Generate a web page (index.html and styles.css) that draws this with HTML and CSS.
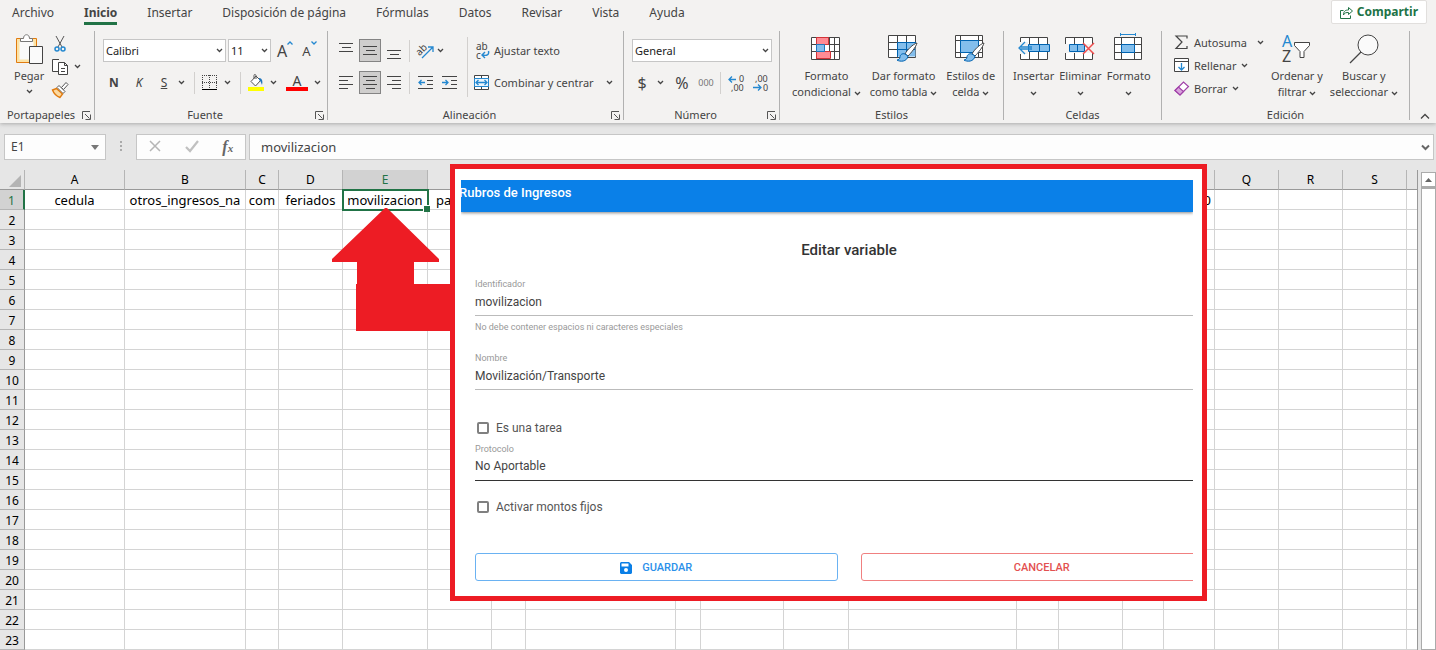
FILE: index.html
```html
<!DOCTYPE html>
<html lang="es">
  <head>
    <meta charset="utf-8">
    <meta name="viewport" content="width=device-width,initial-scale=1.0">
    <title>Rubros de Ingresos</title>
    <link rel="stylesheet" href="styles.css">
  </head>
  <body>
    <svg class="symbols" width="0" height="0">
      <symbol id="caret" viewBox="0 0 7 5"><path d="M1 1l2.500 2.500L6 1" fill="none" stroke="#444" stroke-width="1.300"/></symbol>
      <symbol id="launcher" viewBox="0 0 9 9"><path d="M.5 8V.5H8M3 3l4.500 4.500M8.500 3.500v5h-5" fill="none" stroke="#555"/></symbol>
      <symbol id="brush" viewBox="0 0 22 20">
        <path d="M21 1C17 2 11 8 9 12l3 2c3-3 8-9 9-13z" fill="#fff" stroke="#444"/>
        <path d="M9 12c-3-1-5 1-5 3s-2 3-3 3c3 2 10 2 11-4z" fill="#83beec" stroke="#0063b1"/>
      </symbol>
    </svg>

    <header class="ribbon">
      <nav class="tabs">
        <a href="#">Archivo</a>
        <a href="#" class="activa">Inicio</a>
        <a href="#">Insertar</a>
        <a href="#">Disposición de página</a>
        <a href="#">Fórmulas</a>
        <a href="#">Datos</a>
        <a href="#">Revisar</a>
        <a href="#">Vista</a>
        <a href="#">Ayuda</a>
        <button class="compartir">
          <svg width="13" height="13" viewBox="0 0 13 13" fill="none" stroke="#217346"><path d="M3.500 4.500h-3v8h10v-3M3.500 9c0-4 2-5 5-5V1.500l4 3.500-4 3.500V6.500c-2 0-4 0-5 2.500z"/></svg>
          Compartir
        </button>
      </nav>

      <div class="groups">
        <section class="group portapapeles">
          <div class="group-body">
            <button class="big pegar">
              <svg width="28" height="32" viewBox="0 0 28 32">
                <path d="M1.500 5.500h20v24h-20z" fill="#fce3a6" stroke="#e07b10"/>
                <path d="M4.500 8.500h14v18h-14z" fill="#fafafa"/>
                <path d="M5.500 8.500v-3h3c0-5 6-5 6 0h3v3z" fill="#fff" stroke="#777"/>
                <path d="M14.500 13.500h13v17h-13z" fill="#fafafa" stroke="#444"/>
              </svg>
              <span>Pegar</span>
              <svg class="caret"><use href="#caret"/></svg>
            </button>
            <div class="pila">
              <button aria-label="Cortar">
                <svg width="16" height="16" viewBox="0 0 16 16" fill="none"><path d="M4 0l6 11M12 0L6 11" stroke="#555"/><circle cx="5" cy="13" r="2" stroke="#2488d0" stroke-width="1.500"/><circle cx="11" cy="13" r="2" stroke="#2488d0" stroke-width="1.500"/></svg>
              </button>
              <button aria-label="Copiar">
                <svg width="17" height="16" viewBox="0 0 17 16" fill="#fff" stroke="#444"><path d="M6 12.500H.5V.5H7M6.500 3.500h6l3 3v9h-9zM12.500 3.500v3h3M9 9.500h4M9 12.500h4"/></svg>
                <svg class="caret"><use href="#caret"/></svg>
              </button>
              <button aria-label="Copiar formato">
                <svg width="17" height="16" viewBox="0 0 17 16"><path d="M9.500 5.500L14 .5l2 2-4.500 5z" fill="#fff" stroke="#555"/><path d="M7 3.500l6 6-2 2-6-6z" fill="#fff" stroke="#555"/><path d="M4.500 6.500L.5 8C2 12 4 14 8 15.500l2.500-3.500z" fill="#fbd9a0" stroke="#e07b10" stroke-width="1.400"/></svg>
              </button>
            </div>
          </div>
          <footer><span>Portapapeles</span><button aria-label="Opciones de portapapeles"><svg width="9" height="9"><use href="#launcher"/></svg></button></footer>
        </section>

        <section class="group fuente">
          <div class="group-body filas">
            <div class="fila">
              <label class="combo nombre-fuente"><select aria-label="Fuente"><option>Calibri</option></select><svg class="caret"><use href="#caret"/></svg></label>
              <label class="combo tamano"><select aria-label="Tamaño"><option>11</option></select><svg class="caret"><use href="#caret"/></svg></label>
              <button class="letra-grande">A<svg width="6" height="4" viewBox="0 0 6 4"><path d="M.5 3.500L3 1l2.500 2.500" fill="none" stroke="#2488d0" stroke-width="1.300"/></svg></button>
              <button class="letra-chica">A<svg width="6" height="4" viewBox="0 0 6 4"><path d="M.5.5L3 3 5.500.5" fill="none" stroke="#2488d0" stroke-width="1.300"/></svg></button>
            </div>
            <div class="fila">
              <button class="icono"><b>N</b></button>
              <button class="icono"><i>K</i></button>
              <button class="icono"><u>S</u></button>
              <svg class="caret"><use href="#caret"/></svg>
              <span class="sep"></span>
              <button class="icono" aria-label="Bordes">
                <svg width="16" height="16" viewBox="0 0 16 16" fill="none" stroke="#444"><path d="M0 .5h15M0 7.500h15M.5 0v14M7.500 0v14M14.500 0v14" stroke-dasharray="1 1"/><path d="M0 14.500h15" stroke="#000"/></svg>
              </button>
              <svg class="caret"><use href="#caret"/></svg>
              <span class="sep"></span>
              <button class="icono" aria-label="Color de relleno">
                <svg width="16" height="17" viewBox="0 0 16 17"><path d="M3 7.500L8 2l4.500 4.500-5 5.500zM6 5V1.500C6 0 8 0 8 2v3" fill="#fff" stroke="#555"/><path d="M11 4c3 0 4 3 3 7-1-2-1-4-3-5z" fill="#1f76bd"/><path d="M0 13h16v4H0z" fill="#ff0"/></svg>
              </button>
              <svg class="caret"><use href="#caret"/></svg>
              <button class="icono color-fuente">A</button>
              <svg class="caret"><use href="#caret"/></svg>
            </div>
          </div>
          <footer><span>Fuente</span><button aria-label="Opciones de fuente"><svg width="9" height="9"><use href="#launcher"/></svg></button></footer>
        </section>

        <section class="group alineacion">
          <div class="group-body">
            <div class="filas">
              <div class="fila">
                <button class="icono" aria-label="Alinear arriba"><svg width="14" height="16" viewBox="0 0 14 16" stroke="#444"><path d="M0 .5h14M3 4.500h9M0 8.500h14"/></svg></button>
                <button class="icono pulsado" aria-label="Alinear en el medio"><svg width="14" height="16" viewBox="0 0 14 16" stroke="#444"><path d="M0 3.500h14M3 7.500h9M0 11.500h14"/></svg></button>
                <button class="icono" aria-label="Alinear abajo"><svg width="14" height="16" viewBox="0 0 14 16" stroke="#444"><path d="M0 7.500h14M3 11.500h9M0 15.500h14"/></svg></button>
                <span class="sep"></span>
                <button class="icono" aria-label="Orientación"><svg width="17" height="17" viewBox="0 0 17 17"><text x="0" y="12" font-size="10" fill="#444" transform="rotate(-45 4 10)">ab</text><path d="M5 16L16 5M11 5h5v5" fill="none" stroke="#2488d0" stroke-width="1.300"/></svg></button>
                <svg class="caret"><use href="#caret"/></svg>
              </div>
              <div class="fila">
                <button class="icono" aria-label="Alinear a la izquierda"><svg width="14" height="16" viewBox="0 0 14 16" stroke="#444"><path d="M0 1.500h14M0 5.500h9M0 9.500h14M0 13.500h9"/></svg></button>
                <button class="icono pulsado" aria-label="Centrar"><svg width="14" height="16" viewBox="0 0 14 16" stroke="#444"><path d="M0 1.500h14M3 5.500h9M0 9.500h14M3 13.500h9"/></svg></button>
                <button class="icono" aria-label="Alinear a la derecha"><svg width="14" height="16" viewBox="0 0 14 16" stroke="#444"><path d="M0 1.500h14M5 5.500h9M0 9.500h14M5 13.500h9"/></svg></button>
                <span class="sep"></span>
                <button class="icono" aria-label="Disminuir sangría"><svg width="15" height="15" viewBox="0 0 15 15" fill="none" stroke="#444"><path d="M0 1.500h15M9 5.500h6M9 9.500h6M0 13.500h15"/><path d="M7 7.500H1M3.500 5L1 7.500 3.500 10" stroke="#2488d0" stroke-width="1.300"/></svg></button>
                <button class="icono" aria-label="Aumentar sangría"><svg width="15" height="15" viewBox="0 0 15 15" fill="none" stroke="#444"><path d="M0 1.500h15M9 5.500h6M9 9.500h6M0 13.500h15"/><path d="M0 7.500h6M3.500 5L6 7.500 3.500 10" stroke="#2488d0" stroke-width="1.300"/></svg></button>
              </div>
            </div>
            <div class="filas ajustes">
              <div class="fila">
                <button class="con-texto">
                  <svg width="16" height="18" viewBox="0 0 16 18"><text x="2" y="8" font-size="10" fill="#444">ab</text><text x="2" y="17" font-size="10" fill="#444">c</text><path d="M14.500 9c1 4-2 5-6 4M11 10l-3 3 3 3" fill="none" stroke="#2488d0" stroke-width="1.400"/></svg>
                  Ajustar texto
                </button>
              </div>
              <div class="fila">
                <button class="con-texto">
                  <svg width="16" height="16" viewBox="0 0 16 16"><path d="M.5.5h14v14H.5zM7.500 0v15" fill="#fff" stroke="#444"/><path d="M.5 3.500h14v8H.5z" fill="#eaf4fc" stroke="#2488d0"/><path d="M2 7.500h11M4.500 5L2 7.500 4.500 10M10.500 5L13 7.500 10.500 10" fill="none" stroke="#2488d0" stroke-width="1.300"/></svg>
                  Combinar y centrar
                  <svg class="caret"><use href="#caret"/></svg>
                </button>
              </div>
            </div>
          </div>
          <footer><span>Alineación</span><button aria-label="Opciones de alineación"><svg width="9" height="9"><use href="#launcher"/></svg></button></footer>
        </section>

        <section class="group numero">
          <div class="group-body filas">
            <div class="fila">
              <label class="combo"><select aria-label="Formato de número"><option>General</option></select><svg class="caret"><use href="#caret"/></svg></label>
            </div>
            <div class="fila">
              <button class="icono simbolo">$</button>
              <svg class="caret"><use href="#caret"/></svg>
              <button class="icono simbolo">%</button>
              <button class="icono miles">000</button>
              <span class="sep"></span>
              <button class="icono" aria-label="Aumentar decimales"><svg width="17" height="18" viewBox="0 0 17 18" font-size="9" fill="#444"><text x="11" y="8">0</text><text x="3" y="17">,00</text><path d="M8 5.500H1M4 2.500l-3 3 3 3" fill="none" stroke="#2488d0" stroke-width="1.300"/></svg></button>
              <button class="icono" aria-label="Disminuir decimales"><svg width="17" height="18" viewBox="0 0 17 18" font-size="9" fill="#444"><text x="3" y="8">,00</text><text x="11" y="17">0</text><path d="M1 13.500h8M6 10.500l3 3-3 3" fill="none" stroke="#2488d0" stroke-width="1.300"/></svg></button>
            </div>
          </div>
          <footer><span>Número</span><button aria-label="Opciones de número"><svg width="9" height="9"><use href="#launcher"/></svg></button></footer>
        </section>

        <section class="group estilos">
          <div class="group-body">
            <button class="big">
              <svg width="30" height="24" viewBox="0 0 30 24"><path d="M.5.5h28v22H.5zM0 7.500h29M0 14.500h29M5.500 0v22M18.500 0v22M23.500 0v22" fill="#fff" stroke="#444"/><path d="M5.500.5h12v7h-12zM5.500 14.500h14v7h-14z" fill="#ff8b94" stroke="#d13438"/><path d="M5.500 7.500h8v7h-8z" fill="#83beec" stroke="#1f76bd"/></svg>
              <span>Formato<br>condicional <svg class="caret"><use href="#caret"/></svg></span>
            </button>
            <button class="big">
              <svg width="31" height="28" viewBox="0 0 31 28"><path d="M.5.500h27v22H.5zM0 7.500h28M0 14.500h28M9.500 0v22M18.500 0v22" fill="#fff" stroke="#444"/><path d="M9.500 7.500h18v14h-18z" fill="#83beec"/><path d="M9.500 22V7.500H28M9 14.500h18M18.500 8v14" fill="none" stroke="#0063b1"/><use href="#brush" x="8" y="7" width="22" height="20"/></svg>
              <span>Dar formato<br>como tabla <svg class="caret"><use href="#caret"/></svg></span>
            </button>
            <button class="big">
              <svg width="31" height="28" viewBox="0 0 31 28"><path d="M.5.500h27v22H.5zM0 5.500h28M0 17.500h28M5.500 0v22M23.500 0v22" fill="#fff" stroke="#444"/><path d="M5.500 5.500h18v12h-18z" fill="#83beec" stroke="#0063b1"/><use href="#brush" x="8" y="7" width="22" height="20"/></svg>
              <span>Estilos de<br>celda <svg class="caret"><use href="#caret"/></svg></span>
            </button>
          </div>
          <footer><span>Estilos</span></footer>
        </section>

        <section class="group celdas">
          <div class="group-body">
            <button class="big">
              <svg width="32" height="24" viewBox="0 0 32 24"><path d="M2.500.5h27v22h-27zM11.500 0v23M20.500 0v23" fill="#fff" stroke="#444"/><path d="M10.500 7.500h21v7h-21zM21.500 8v7" fill="#83beec" stroke="#0063b1"/><path d="M0 5h10v12H0z" fill="#f3f2f1"/><path d="M14 10H2M14 12H2M7 5l-6 6 6 6" fill="none" stroke="#2488d0" stroke-width="1.300"/></svg>
              <span>Insertar<br><svg class="caret"><use href="#caret"/></svg></span>
            </button>
            <button class="big">
              <svg width="32" height="24" viewBox="0 0 32 24"><path d="M1.500.5h27v22h-27zM10.500 0v23M19.500 0v23" fill="#fff" stroke="#444"/><path d="M0 7h31v9H0z" fill="#f3f2f1"/><path d="M5.500 7.500h15v7h-15zM13.500 8v7" fill="#83beec" stroke="#0063b1"/><path d="M19 6l11 11M30 6L19 17" stroke="#f04e4e" stroke-width="1.500"/></svg>
              <span>Eliminar<br><svg class="caret"><use href="#caret"/></svg></span>
            </button>
            <button class="big">
              <svg width="29" height="32" viewBox="0 0 29 32"><path d="M.5 4.500h27v22H.5zM0 11.500h28M0 19.500h28M7.500 4v22M20.500 4v22" fill="#fff" stroke="#444"/><path d="M7.500 11.500h13v8h-13z" fill="#83beec" stroke="#0063b1"/><path d="M6.500 0v3M21.500 0v3M7 1.500h14" stroke="#2488d0"/></svg>
              <span>Formato<br><svg class="caret"><use href="#caret"/></svg></span>
            </button>
          </div>
          <footer><span>Celdas</span></footer>
        </section>

        <section class="group edicion">
          <div class="group-body">
            <div class="pila">
              <button class="con-texto autosuma">
                <svg width="15" height="15" viewBox="0 0 15 15" fill="none" stroke="#444" stroke-width="1.200"><path d="M13 3.500V1H2l6 6-6 6.500h11V11"/></svg>
                Autosuma
                <svg class="caret"><use href="#caret"/></svg>
              </button>
              <button class="con-texto">
                <svg width="15" height="15" viewBox="0 0 15 15"><path d="M.5.5h14v13H.5zM0 3.500h15" fill="#fff" stroke="#444"/><path d="M7.500 5v7M4.500 9l3 3 3-3" fill="none" stroke="#2488d0" stroke-width="1.300"/></svg>
                Rellenar
                <svg class="caret"><use href="#caret"/></svg>
              </button>
              <button class="con-texto">
                <svg width="15" height="15" viewBox="0 0 15 15" stroke="#a040a8" stroke-width="1.200"><path d="M1 9.500L9.500 1l5 4.500L6 14z" fill="#fff"/><path d="M1 9.500L4.500 6l5 4.500L6 14z" fill="#d9a3dc"/></svg>
                Borrar
                <svg class="caret"><use href="#caret"/></svg>
              </button>
            </div>
            <button class="big">
              <svg width="29" height="30" viewBox="0 0 29 30"><text x="0" y="13" font-size="16" fill="#2488d0">A</text><text x="0" y="28" font-size="16" fill="#444">Z</text><path d="M12.500 8.500h15v3l-5.500 6v6h-4v-6l-5.500-6z" fill="#fff" stroke="#444"/></svg>
              <span>Ordenar y<br>filtrar <svg class="caret"><use href="#caret"/></svg></span>
            </button>
            <button class="big">
              <svg width="30" height="30" viewBox="0 0 30 30" fill="#fafafa" stroke="#444"><circle cx="19" cy="11" r="10"/><path d="M12 18L1 29" stroke-width="1.300"/></svg>
              <span>Buscar y<br>seleccionar <svg class="caret"><use href="#caret"/></svg></span>
            </button>
          </div>
          <footer><span>Edición</span></footer>
        </section>

        <button class="contraer" aria-label="Contraer la cinta"><svg width="10" height="6" viewBox="0 0 10 6"><path d="M1 5.500l4-4 4 4" fill="none" stroke="#444" stroke-width="1.300"/></svg></button>
      </div>
    </header>

    <div class="barra-formulas">
      <label class="cuadro celda-activa"><input aria-label="Cuadro de nombres" value="E1"><svg width="8" height="5"><path d="M0 0h8L4 5z" fill="#777"/></svg></label>
      <svg class="puntos" width="2" height="12" fill="#aaa"><path d="M0 0h2v2H0zM0 4h2v2H0zM0 8h2v2H0z"/></svg>
      <div class="cuadro acciones">
        <button aria-label="Cancelar edición"><svg width="12" height="12" viewBox="0 0 12 12"><path d="M1 1l10 10M11 1L1 11" stroke="#b5b5b5" stroke-width="1.500"/></svg></button>
        <button aria-label="Introducir"><svg width="14" height="12" viewBox="0 0 14 12"><path d="M1 7l4 4 8-10" fill="none" stroke="#c0c0c0" stroke-width="2.200"/></svg></button>
        <button class="fx">f<small>x</small></button>
      </div>
      <label class="cuadro formula"><input aria-label="Fórmula" value="movilizacion"><svg width="9" height="7" viewBox="0 0 9 7"><path d="M1 1.500L4.500 5 8 1.500" fill="none" stroke="#666" stroke-width="2"/></svg></label>
    </div>

    <main class="hoja">
      <table>
        <colgroup>
          <col class="c-num"><col class="c-a"><col class="c-b"><col class="c-c"><col class="c-d"><col class="c-e"><col class="c-f"><col class="c-g"><col class="c-h"><col class="c-i"><col class="c-j"><col class="c-k"><col class="c-l"><col class="c-m"><col class="c-n"><col class="c-o"><col class="c-p"><col class="c-q"><col class="c-r"><col class="c-s"><col>
        </colgroup>
        <thead>
          <tr>
            <th class="esquina"><svg width="12" height="12"><path d="M12 0v12H0z" fill="#b4b4b4"/></svg></th>
            <th>A</th><th>B</th><th>C</th><th>D</th><th class="sel">E</th>
            <th></th><th></th><th></th><th></th><th></th><th></th><th></th><th></th><th></th><th></th><th></th>
            <th>Q</th><th>R</th><th>S</th><th></th>
          </tr>
        </thead>
        <tbody id="filas">
          <tr>
            <th class="sel">1</th>
            <td>cedula</td><td>otros_ingresos_na</td><td>com</td><td>feriados</td><td class="activa">movilizacion</td>
            <td class="izq">pa</td><td></td><td></td><td></td><td></td><td></td><td></td><td></td><td></td><td></td><td class="der">0</td>
            <td></td><td></td><td></td><td></td>
          </tr>
        </tbody>
      </table>
      <div class="scroll">
        <button aria-label="Subir"><svg width="7" height="4"><path d="M0 4h7L3.500 0z" fill="#666"/></svg></button>
        <div class="pista"></div>
      </div>
    </main>

    <svg class="flecha" width="120" height="124" viewBox="0 0 120 124"><path d="M53 0h2l52 51v3H82v22h38v47H24V76h1V54H0v-3z" fill="#ed1c24"/></svg>

    <div class="captura">
      <form class="vista">
        <h1>Rubros de Ingresos</h1>
        <div class="contenido">
          <h2>Editar variable</h2>
          <div class="campo">
            <label for="identificador">Identificador</label>
            <input id="identificador" value="movilizacion">
            <small>No debe contener espacios ni caracteres especiales</small>
          </div>
          <div class="campo nombre">
            <label for="nombre">Nombre</label>
            <input id="nombre" value="Movilización/Transporte">
          </div>
          <label class="check tarea"><input type="checkbox">Es una tarea</label>
          <div class="campo protocolo">
            <label for="protocolo">Protocolo</label>
            <select id="protocolo"><option>No Aportable</option></select>
          </div>
          <label class="check montos"><input type="checkbox">Activar montos fijos</label>
          <div class="botones">
            <button type="button" class="guardar">
              <svg width="12" height="12" viewBox="0 0 12 12"><path d="M1 0h8l3 3v8l-1 1H1l-1-1V1zM1.500 1.500v3h7v-3zM6 6a2 2 0 100 4 2 2 0 000-4z" fill="#0b7fe6" fill-rule="evenodd"/></svg>
              GUARDAR
            </button>
            <button type="button" class="cancelar">CANCELAR</button>
          </div>
        </div>
      </form>
    </div>

    <script src="script.js"></script>
  </body>
</html>
```

FILE: styles.css
```css
* {
  box-sizing: border-box;
}

body {
  margin: 0;
  position: relative;
  min-height: 100vh;
  overflow: hidden;
  background: #e6e6e6;
  font-family: "Noto Sans", "Open Sans", sans-serif;
  font-size: 12px;
  line-height: 16px;
  color: #444;
}

button, input, select {
  font: inherit;
  color: inherit;
  padding: 0;
  border: 0;
  background: none;
}

select {
  appearance: none;
}

svg {
  flex: none;
  overflow: visible;
}

.symbols {
  position: absolute;
}

.caret {
  width: 7px;
  height: 5px;
}

/* cinta de opciones */
.ribbon {
  background: #f3f2f1;
  height: 123px;
  box-shadow: 0 1px 4px #aaa;
}

.tabs {
  display: flex;
  align-items: flex-start;
  gap: 30px;
  height: 31px;
  padding-left: 12px;
}

.tabs a {
  margin-top: 5px;
  height: 20px;
  color: #444;
  text-decoration: none;
}

.tabs .activa {
  font-weight: bold;
  border-bottom: 3px solid #217346;
}

.compartir {
  display: flex;
  align-items: center;
  gap: 4px;
  height: 24px;
  margin: 0 9px 0 auto;
  padding: 0 8px;
  background: #fff;
  border: 1px solid #e1dfdd;
  border-radius: 2px;
  color: #217346;
  font-weight: bold;
}

.groups {
  display: flex;
  height: 92px;
}

.group {
  display: flex;
  flex-direction: column;
  height: 89px;
  border-right: 1px solid #b1b1b1;
}

.portapapeles { width: 95px; }
.fuente { width: 233px; }
.alineacion { width: 296px; }
.numero { width: 156px; }
.estilos { width: 224px; }
.celdas { width: 158px; }
.edicion { width: 248px; }

.group-body {
  display: flex;
  flex: none;
  height: 76px;
}

.group footer {
  display: flex;
  flex: none;
  align-items: center;
  height: 16px;
  font-size: 11px;
}

.group footer span {
  flex: 1;
  text-align: center;
  white-space: nowrap;
}

.group footer button {
  display: flex;
  width: 12px;
}

.filas {
  display: flex;
  flex-direction: column;
  gap: 9px;
  padding-top: 8px;
}

.fila {
  display: flex;
  align-items: center;
  height: 23px;
}

.big {
  display: flex;
  flex-direction: column;
  align-items: center;
  font-size: 11px;
  white-space: nowrap;
}

.big > svg:first-child {
  height: 32px;
  margin: 2px 0 3px;
}

.big .caret {
  vertical-align: middle;
}

.icono {
  display: flex;
  align-items: center;
  justify-content: center;
  width: 24px;
  height: 23px;
}

.sep {
  width: 1px;
  height: 22px;
  background: #d2d0ce;
}

.combo {
  display: flex;
  align-items: center;
  height: 23px;
  padding: 0 2px;
  background: #fff;
  border: 1px solid #c6c6c6;
  font-size: 11px;
}

.combo select {
  flex: 1;
  min-width: 0;
  color: #222;
}

.pegar {
  padding-left: 14px;
}

.pegar .caret {
  margin-top: 5px;
}

.pila {
  display: flex;
  flex-direction: column;
}

.pila button {
  display: flex;
  align-items: center;
  gap: 5px;
  height: 23px;
}

.portapapeles .pila {
  padding: 1px 0 0 8px;
}

.fuente .group-body {
  padding-left: 8px;
}

.fuente .fila:nth-child(2) {
  gap: 3px;
  padding-right: 6px;
}

.fuente .fila:nth-child(2) .icono {
  width: 22px;
}

.fuente .sep {
  margin: 0 1px 0 6px;
}

.nombre-fuente { width: 123px; }
.tamano { width: 43px; margin-left: 2px; }

.letra-grande, .letra-chica {
  display: flex;
  height: 20px;
  margin-left: 6px;
  font-size: 16px;
  line-height: 20px;
}

.letra-chica {
  margin-left: 9px;
  font-size: 13px;
}

.color-fuente {
  font-size: 14px;
}

.fuente .fila .color-fuente {
  width: 16px;
  height: 17px;
  border-bottom: 4px solid #f00;
  margin: 0 3px 0 6px;
}

.alineacion .filas:first-child {
  padding-left: 6px;
}

.alineacion .pulsado {
  background: #cfcecd;
  border: 1px solid #848484;
  width: 22px;
  margin: 0 1px;
}

.alineacion .sep {
  margin: 0 3px;
}

.ajustes {
  margin: 6px 0 10px 6px;
  border-left: 1px solid #d2d0ce;
  padding: 2px 0 0 6px;
}

.con-texto {
  display: flex;
  align-items: center;
  gap: 4px;
  font-size: 11px;
  white-space: nowrap;
}

.ajustes .caret {
  margin-left: 8px;
}

.numero .group-body {
  padding-left: 8px;
}

.numero .combo {
  width: 140px;
}

.numero .simbolo {
  font-size: 16px;
}

.numero .simbolo:first-child {
  width: 20px;
  margin-right: 5px;
}

.numero .miles {
  font-size: 9px;
  color: #777;
}

.numero .simbolo:nth-of-type(2) {
  margin-left: 6px;
}

.numero .sep {
  margin: 0 3px 0 2px;
}

.estilos .group-body {
  padding-left: 12px;
  gap: 9px;
}

.celdas .group-body {
  padding-left: 9px;
  gap: 5px;
}

.edicion .group-body {
  padding-left: 12px;
  gap: 7px;
}

.autosuma .caret {
  margin-left: 5px;
}

.contraer {
  align-self: flex-end;
  margin: 0 6px 0 auto;
}

/* barra de formulas */
.barra-formulas {
  display: flex;
  align-items: center;
  height: 47px;
  padding: 1px 2px 0 4px;
  font-size: 13px;
}

.cuadro {
  display: flex;
  align-items: center;
  height: 26px;
  background: #fdfdfd;
  border: 1px solid #c6c6c6;
}

.cuadro input {
  flex: 1;
  min-width: 0;
}

.celda-activa {
  width: 102px;
  padding: 0 6px;
  font-size: 12px;
}

.puntos {
  margin: 0 14px;
}

.acciones {
  width: 110px;
  justify-content: space-around;
}

.fx {
  font-family: "Liberation Serif", serif;
  font-size: 16px;
  font-style: italic;
  font-weight: bold;
  color: #666;
}

.fx small {
  font-size: 11px;
}

.formula {
  flex: 1;
  margin-left: 3px;
  padding: 0 3px 0 11px;
}

/* hoja */
.hoja {
  display: flex;
}

table {
  flex: 1;
  width: 0;
  table-layout: fixed;
  border-spacing: 0;
  border-right: 1px solid #999;
  font-size: 13px;
  line-height: 17px;
  color: #000;
}

.c-num { width: 25px; }
.c-a { width: 100px; }
.c-b { width: 121px; }
.c-c { width: 33px; }
.c-d, .c-f, .c-n, .c-q, .c-r, .c-s { width: 64px; }
.c-e { width: 85px; }
.c-g { width: 34px; }
.c-h { width: 150px; }
.c-i { width: 25px; }
.c-j { width: 83px; }
.c-k { width: 65px; }
.c-l { width: 168px; }
.c-m { width: 42px; }
.c-o { width: 41px; }
.c-p { width: 51px; }

th, td {
  height: 20px;
  padding: 2px 0 0;
  text-align: center;
  white-space: nowrap;
}

th {
  background: #e6e6e6;
  border-right: 1px solid #999;
  border-bottom: 1px solid #999;
  font-size: 12px;
  font-weight: normal;
}

thead th {
  padding: 0;
  border-right-color: #b5b5b5;
}

tbody th {
  border-bottom-color: #b5b5b5;
}

td {
  background: #fff;
  border-right: 1px solid #d4d4d4;
  border-bottom: 1px solid #d4d4d4;
}

tr > :last-child {
  border-right: 0;
}

.esquina svg {
  display: block;
  margin: 2px 3px 0 auto;
}

.sel {
  background: #d2d2d2;
  color: #217346;
}

tbody .sel {
  border-right: 2px solid #217346;
}

thead .sel {
  border-bottom-color: #217346;
}

td.activa {
  position: relative;
  outline: 2px solid #217346;
  outline-offset: -1px;
}

td.activa::after {
  content: "";
  position: absolute;
  right: -3px;
  bottom: -3px;
  width: 6px;
  height: 6px;
  background: #217346;
  border: 1px solid #fff;
  border-width: 1px 0 0 1px;
}

td.izq {
  text-align: left;
  padding-left: 8px;
}

td.der {
  text-align: right;
  padding-right: 3px;
}

.scroll {
  display: flex;
  flex-direction: column;
  width: 15px;
  margin: 2px 0 0 3px;
}

.scroll button {
  display: flex;
  align-items: center;
  justify-content: center;
  height: 15px;
  background: #fff;
  border: 1px solid #ababab;
}

.pista {
  flex: 1;
  background: #fff;
  border: 1px solid #ababab;
  border-top-width: 2px;
}

/* flecha y ventana encima de la hoja */
.flecha {
  position: absolute;
  left: 332px;
  top: 208px;
}

.captura {
  position: absolute;
  left: 450px;
  top: 164px;
  width: 757px;
  height: 437px;
  padding: 11px 9px 0 6px;
  border: 5px solid #ed1c24;
  background: #fff;
  font-family: Roboto, sans-serif;
}

.vista {
  overflow: hidden;
  height: 100%;
}

.vista h1 {
  height: 32px;
  margin: 0;
  padding-top: 5px;
  background: #0a80e8;
  box-shadow: 0 1px 3px #888;
  color: #fff;
  font-size: 13px;
  font-weight: 500;
  line-height: 16px;
  text-indent: -2px;
}

.contenido {
  width: calc(100% + 30px);
  padding-left: 14px;
}

.vista h2 {
  margin: 28px 0 18px;
  font-size: 15px;
  font-weight: 500;
  line-height: 20px;
  text-align: center;
  color: #333;
}

.campo {
  display: flex;
  flex-direction: column;
  font-size: 12px;
}

.campo label, .campo small {
  font-size: 9px;
  line-height: 12px;
  color: #999;
}

.campo small {
  margin-top: 5px;
}

.campo input, .campo select {
  height: 26px;
  padding-bottom: 2px;
  border-bottom: 1px solid #bbb;
  color: #444;
}

.nombre {
  margin-top: 19px;
}

.protocolo {
  margin-top: 7px;
}

.campo select {
  padding-bottom: 3px;
  border-bottom-color: #333;
}

.check {
  display: flex;
  align-items: center;
  gap: 7px;
  height: 16px;
  color: #555;
}

.check input {
  appearance: none;
  width: 12px;
  height: 12px;
  margin: 0 0 0 2px;
  border: 2px solid #808080;
  border-radius: 2px;
}

.tarea {
  margin-top: 30px;
}

.montos {
  margin-top: 18px;
}

.botones {
  display: grid;
  grid-template-columns: 1fr 1fr;
  gap: 23px;
  margin-top: 38px;
}

.botones button {
  display: flex;
  align-items: center;
  justify-content: center;
  gap: 10px;
  height: 28px;
  padding-top: 1px;
  border: 1px solid;
  border-radius: 3px;
  font-size: 11px;
  font-weight: 500;
}

.botones .guardar {
  border-color: #6ab2f2;
  color: #2b90ea;
}

.botones .cancelar {
  border-color: #f08080;
  color: #e35050;
}
```

FILE: script.js
```js
const filas = document.getElementById('filas')

// la fila 1 ya tiene datos, el resto va vacio
for (let i = 2; i <= 23; i++) {
  const fila = document.createElement('tr')
  const numero = document.createElement('th')
  numero.textContent = i
  fila.appendChild(numero)
  for (let j = 0; j < 20; j++) {
    fila.appendChild(document.createElement('td'))
  }
  filas.appendChild(fila)
}
```
